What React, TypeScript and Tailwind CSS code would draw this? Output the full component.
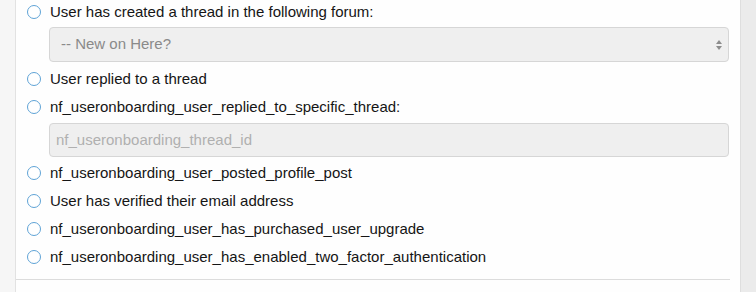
import { ReactNode } from "react";

const Radio = () => (
  <span className="box-border block h-[14px] w-[14px] shrink-0 rounded-full border-[1.5px] border-[#5fa3d6] bg-white" />
);

function Row({ children, className = "h-7" }: { children: ReactNode; className?: string }) {
  return (
    <div className={`flex items-center ${className}`}>
      <div className="flex w-[34px] justify-center pl-[2px]">
        <Radio />
      </div>
      <span className="text-[15px] text-[#151515]">{children}</span>
    </div>
  );
}

export default function App() {
  return (
    <div className="flex h-[292px] w-[756px] overflow-hidden bg-white font-['Liberation_Sans',Arial,sans-serif]">
      <div className="w-4 shrink-0 border-r border-[#e2e2e2] bg-[#f6f6f6]" />
      <div className="flex-1 bg-[#fefefe]">
        <div className="pr-[10px]">
          <div className="pr-[1px]">
            <Row className="h-6">User has created a thread in the following forum:</Row>
            <div className="ml-[33px] mt-[3px] flex h-[35px] items-center justify-between rounded-[4px] border border-[#d6d6d6] bg-[#efefef] pl-[11px] pr-[5px]">
              <span className="text-[15px] text-[#8a8a8a]">-- New on Here?</span>
              <svg width="8" height="12" viewBox="0 0 8 12">
                <path d="M4 1 L7 5 L1 5 Z" fill="#8c8c8c" />
                <path d="M4 11 L7 7 L1 7 Z" fill="#8c8c8c" />
              </svg>
            </div>
            <Row className="mt-[3px] h-7">User replied to a thread</Row>
            <Row>nf_useronboarding_user_replied_to_specific_thread:</Row>
            <div className="ml-[33px] mt-[2px] flex h-[34px] items-center rounded-[4px] border border-[#d6d6d6] bg-[#efefef] pl-[6px]">
              <span className="text-[15px] text-[#b0b0b0]">nf_useronboarding_thread_id</span>
            </div>
            <Row className="mt-[2px] h-7">nf_useronboarding_user_posted_profile_post</Row>
            <Row>User has verified their email address</Row>
            <Row>nf_useronboarding_user_has_purchased_user_upgrade</Row>
            <Row>nf_useronboarding_user_has_enabled_two_factor_authentication</Row>
          </div>
          <div className="mt-2 border-t border-[#dcdcdc]" />
        </div>
      </div>
      <div className="w-[16px] shrink-0 border-l border-[#dedede] bg-[#ebebeb]" />
    </div>
  );
}
